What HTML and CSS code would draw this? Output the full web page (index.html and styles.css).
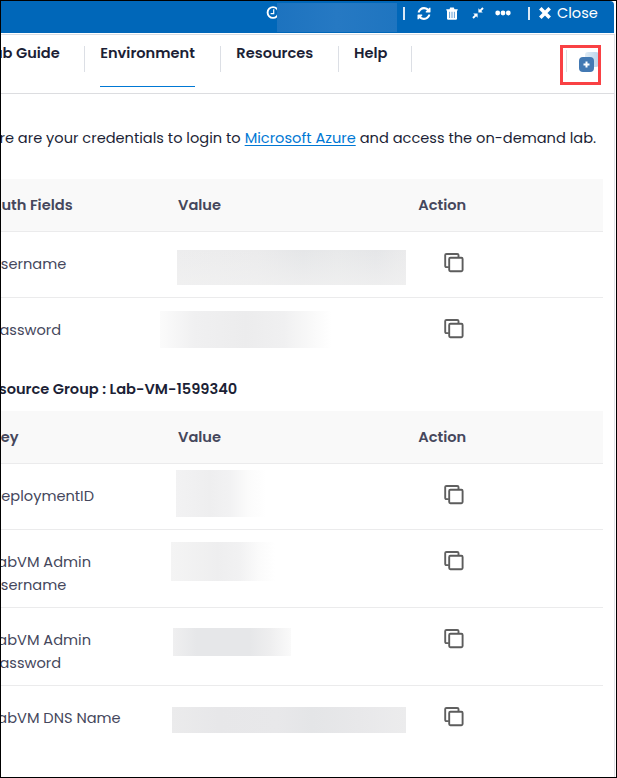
FILE: index.html
```html
<!DOCTYPE html>
<html lang="en">
<head>
<meta charset="utf-8">
<title>Lab environment</title>
<link rel="stylesheet" href="styles.css">
</head>
<body>
<svg class="defs" aria-hidden="true">
  <symbol id="copy" viewBox="0 .4 20 20"><path d="M4.8 14.5H2.500Q1.200 14.5 1.200 13.200V2.500Q1.200 1.400 2.500 1.400H13.200Q14.500 1.400 14.500 2.500V4.500" fill="none" stroke="#606060" stroke-width="1.9"/><rect x="5.2" y="5.2" width="13.4" height="13.4" rx="1.2" fill="none" stroke="#5c5c5c" stroke-width="1.9"/></symbol>
</svg>
<div class="panel">
  <header class="topbar">
    <svg class="clock" viewBox="0 0 14 14"><circle cx="7" cy="6.500" r="5.4" fill="none" stroke="#fff" stroke-width="1.9"/><path d="M7.700 3.300V7.600H4.600" fill="none" stroke="#fff" stroke-width="1.200"/></svg>
    <span class="timer"></span>
    <span class="bar bar-a"></span>
    <svg class="refresh" viewBox="0 128 1536 1536"><path fill="#fff" d="M1511 1056q0 5-1 7-64 268-268 434.500t-478 166.500q-146 0-282.500-55t-243.500-157l-129 129q-19 19-45 19t-45-19-19-45v-448q0-26 19-45t45-19h448q26 0 45 19t19 45-19 45l-137 137q71 66 161 102t187 36q134 0 250-65t186-179q11-17 53-117 8-23 30-23h192q13 0 22.500 9.500t9.500 22.500zm25-800v448q0 26-19 45t-45 19h-448q-26 0-45-19t-19-45 19-45l138-138q-148-137-349-137-134 0-250 65t-186 179q-11 17-53 117-8 23-30 23h-199q-13 0-22.500-9.500t-9.500-22.500v-7q65-268 270-434.500t480-166.500q146 0 284 55.500t245 156.500l130-129q19-19 45-19t45 19 19 45z"/></svg>
    <svg class="trash" viewBox="0 0 12 13"><path d="M.3 2.2H3.500L4.200.6H7.800L8.500 2.200H11.700V3.400H.3Z" fill="#fff"/><path d="M1 3H11V11.500Q11 12.800 9.800 12.800H2.200Q1 12.800 1 11.500Z" fill="#fff"/><path d="M3.600 4.800V11M6 4.800V11M8.400 4.800V11" stroke="#5595d0" stroke-width=".9"/></svg>
    <svg class="compress" viewBox="0 0 12 12"><path d="M6.400 5.600V1.200L7.900 2.700 10.300.3 11.700 1.700 9.300 4.100 10.800 5.600ZM5.600 6.400V10.800L4.100 9.300 1.700 11.700.3 10.300 2.700 7.900 1.200 6.400Z" fill="#fff"/></svg>
    <svg class="dots" viewBox="0 0 16 6"><g fill="#fff"><circle cx="2.700" cy="3" r="2.400"/><circle cx="8" cy="3" r="2.400"/><circle cx="13.300" cy="3" r="2.400"/></g></svg>
    <span class="bar bar-b"></span>
    <svg class="cross" viewBox="0 0 11 11"><path d="M1.200 1.200 9.800 9.800M9.800 1.200 1.200 9.800" stroke="#fff" stroke-width="3.300"/></svg>
    <span class="close">Close</span>
  </header>

  <nav class="tabs">
    <div class="tab guide"><span>Lab Guide</span></div>
    <div class="tab active"><span>Environment</span></div>
    <div class="tab resources"><span>Resources</span></div>
    <div class="tab"><span>Help</span></div>
    <div class="split">
      <svg viewBox="0 0 20 21"><defs><linearGradient id="g" x1="0" x2="1"><stop offset="0" stop-color="#e2edf6"/><stop offset="1" stop-color="#b9d3e9"/></linearGradient></defs><rect x="6" y="0" width="14" height="15" rx="3" fill="url(#g)"/><rect x="0" y="5" width="15" height="15" rx="4" fill="#4379b3"/><path d="M7.500 9.500V15.500M4.500 12.500H10.500" stroke="#fff" stroke-width="2"/></svg>
    </div>
  </nav>

  <main class="content">
    <p class="intro"><span>Here are your credentials to login to</span><a>Microsoft Azure</a><span>and access the on-demand lab.</span></p>

    <section class="table">
      <div class="row head"><span>Auth Fields</span><span>Value</span><span>Action</span></div>
      <div class="row"><span>Username</span><i class="mask m1"></i><svg class="copy"><use href="#copy"/></svg></div>
      <div class="row last"><span>Password</span><i class="mask m2"></i><svg class="copy"><use href="#copy"/></svg></div>
    </section>

    <h2>Resource Group : Lab-VM-1599340</h2>

    <section class="table">
      <div class="row head"><span>Key</span><span>Value</span><span>Action</span></div>
      <div class="row"><span>DeploymentID</span><i class="mask m3"></i><svg class="copy"><use href="#copy"/></svg></div>
      <div class="row tall"><span>LabVM Admin<br>Username</span><i class="mask m4"></i><svg class="copy"><use href="#copy"/></svg></div>
      <div class="row tall"><span>LabVM Admin<br>Password</span><i class="mask m5"></i><svg class="copy"><use href="#copy"/></svg></div>
      <div class="row last"><span>LabVM DNS Name</span><i class="mask m6"></i><svg class="copy"><use href="#copy"/></svg></div>
    </section>
  </main>
  <div class="marker"></div>
</div>
</body>
</html>
```
FILE: styles.css
```css
* { box-sizing: border-box; }
body {
  margin: 0;
  background: #fff;
  color: #1c1f36;
  font: 400 14.6px/23px Poppins, Inter, sans-serif;
}
.defs { position: absolute; width: 0; height: 0; }
.panel {
  position: relative;
  width: 617px;
  height: 778px;
  border: 1px solid #000;
  padding-right: 1px;
  overflow: hidden;
}
.topbar {
  display: flex;
  align-items: center;
  height: 32px;
  padding: 0 0 8px 265px;
  background: #0067b9;
  border-top-right-radius: 4px;
  color: #fff;
  margin-right: 1px;
}
.topbar svg { flex: none; }
.clock { width: 14px; height: 14px; }
.timer {
  position: relative;
  flex: none;
  width: 120px;
  height: 29px;
  margin: 8px 0 0 -3px;
  background: linear-gradient(90deg, #1d73bf, #2679c3 50%, #1f75c0);
}
.bar { width: 2px; height: 13px; background: #d9e8f5; flex: none; }
.bar-a { margin-left: 6px; }
.bar-b { margin-left: 16.5px; }
.refresh { width: 14px; height: 13px; margin-left: 12px; }
.trash { width: 12px; height: 13px; margin-left: 15px; }
.compress { width: 12px; height: 12px; margin-left: 14px; }
.dots { width: 16px; height: 6px; margin-left: 11px; }
.cross { width: 12px; height: 12px; margin-left: 9px; }
.close { margin-left: 6.5px; white-space: nowrap; }

.tabs {
  display: flex;
  align-items: flex-start;
  height: 60px;
  margin-top: 1px;
  border-top: 1px solid #dcdee3;
  border-bottom: 1px solid #dcdde0;
  font-weight: 600;
  white-space: nowrap;
  border-right: 1px solid #dfe1e6;
}
.tab {
  height: 26px;
  margin-top: 11px;
  padding: 0 24px 0 15px;
  border-right: 1px solid #dcdfe5;
}
.tab span { display: block; margin-top: -4px; height: 45px; }
.tab.guide { padding-left: 0; margin-left: -15px; }
.tab.active { padding: 0 25px 0 15.4px; }
.tab.active span { padding-right: .5px; border-bottom: 1px solid #0078d4; }
.tab.resources { padding-right: 24.7px; }
.split {
  margin: 15px 15px 0 auto;
  width: 33px;
  height: 22px;
  border-left: 1px solid #dcdfe5;
}
.split svg { display: block; width: 20px; height: 21px; margin: 2px 0 0 12px; }

.content { height: 683px; border-right: 1px solid #dfe1e6; overflow: hidden; }
.intro { display: flex; margin: 33px 0 29px -20.7px; white-space: nowrap; }
.intro a { color: #0078d4; text-decoration: underline; text-underline-offset: 2px; margin: 0 4px; }
.table { width: 626px; margin-left: -24px; color: #45475c; }
.row {
  display: grid;
  grid-template-columns: 187px 240.3px 1fr;
  align-items: start;
  height: 66px;
  padding: 21px 0 0 14px;
  border-bottom: 1px solid #ebebec;
  white-space: nowrap;
}
.row.head { height: 53px; padding-top: 15px; background: #f9f9f9; font-weight: 600; }
.row.tall { height: 78px; }
.row.last { border-bottom: 0; }
.copy { width: 20px; height: 20px; margin: 0 0 0 25.7px; }
h2 { margin: 14px 0 10px -20.7px; font: inherit; font-weight: 600; white-space: nowrap; }

.mask { display: block; }
.m1 { width: 229px; height: 35px; margin: -3px 0 0 -1px; background: linear-gradient(0deg, #f1f1f1c0, #f1f1f100), linear-gradient(90deg, #ededee, #ebebec 35%, #e5e6e8 55%, #e8e9ea 70%, #e5e6e8 87%, #ebebec); }
.m2 { width: 172px; height: 37px; margin: -8px 0 0 -18px; background: linear-gradient(90deg, #fbfbfb, #f0f0f1 20%, #ececed 50%, #f0f0f1 72%, #fafafa 90%, #fff); }
.m3 { width: 90px; height: 47px; margin: -15px 0 0 -2px; background: linear-gradient(90deg, #f2f2f3, #eeeeef 38%, #f2f2f3 60%, #fbfbfb 80%, #fff); }
.m4 { width: 104px; height: 39px; margin: -9px 0 0 -7px; background: linear-gradient(90deg, #f4f4f4, #eeeeef 45%, #f1f1f2 65%, #fbfbfb 85%, #fff); }
.m5 { width: 118px; height: 28px; margin: -1px 0 0 -5px; background: linear-gradient(90deg, #efeff0, #e6e7e9 20%, #e6e7e9 65%, #eeeeef 82%, #fafafa); }
.m6 { width: 234px; height: 26px; margin: 0 0 0 -6px; background: linear-gradient(90deg, #ebebec, #e7e7e9 20%, #e8e8ea 45%, #e4e5e7 60%, #e8e8ea 80%, #ececed); }
.marker {
  position: absolute;
  left: 559px;
  top: 44px;
  width: 41px;
  height: 40px;
  border: 3px solid #f94144;
}
```
